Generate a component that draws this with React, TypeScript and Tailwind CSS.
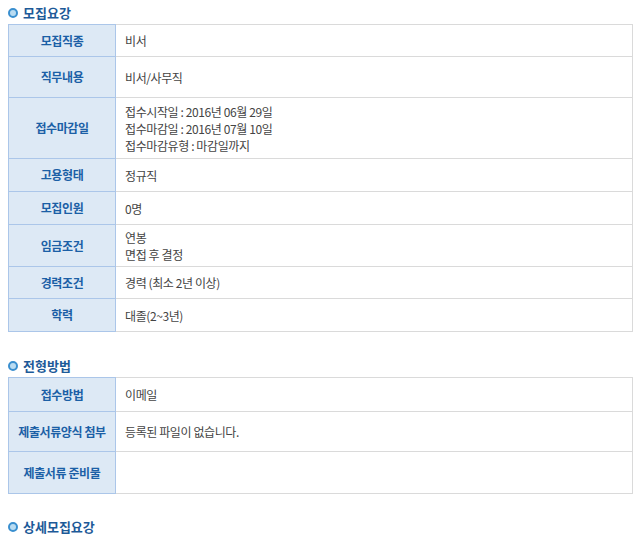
import React from "react";

type Row = { label: string; lines: string[]; h: string };

const recruit: Row[] = [
  { label: "모집직종", lines: ["비서"], h: "h-[32px]" },
  { label: "직무내용", lines: ["비서/사무직"], h: "h-[41px]" },
  {
    label: "접수마감일",
    lines: [
      "접수시작일 : 2016년 06월 29일",
      "접수마감일 : 2016년 07월 10일",
      "접수마감유형 : 마감일까지",
    ],
    h: "h-[61px]",
  },
  { label: "고용형태", lines: ["정규직"], h: "h-[33px]" },
  { label: "모집인원", lines: ["0명"], h: "h-[33px]" },
  { label: "임금조건", lines: ["연봉", "면접 후 결정"], h: "h-[42px]" },
  { label: "경력조건", lines: ["경력 (최소 2년 이상)"], h: "h-[32px]" },
  { label: "학력", lines: ["대졸(2~3년)"], h: "h-[33px]" },
];

const apply: Row[] = [
  { label: "접수방법", lines: ["이메일"], h: "h-[34px]" },
  { label: "제출서류양식 첨부", lines: ["등록된 파일이 없습니다."], h: "h-[40px]" },
  { label: "제출서류 준비물", lines: [], h: "h-[42px]" },
];

function Heading({ title }: { title: string }) {
  return (
    <div className="flex items-center gap-[5px] pl-[8px]">
      <span className="w-[6px] h-[6px] rounded-full bg-[#b9dcf2] border-[2px] border-[#3a8fcf] box-content" />
      <span className="text-[13px] font-bold text-[#1d5a98] leading-none">{title}</span>
    </div>
  );
}

function InfoTable({ rows }: { rows: Row[] }) {
  return (
    <table className="ml-[8px] w-[625px] border-collapse text-[12px] tracking-[-0.4px]">
      <tbody>
        {rows.map((r) => (
          <tr key={r.label} className={r.h}>
            <th className="w-[107px] p-0 bg-[#dde9f5] border border-[#abc6e9] text-[#1b5fa6] font-bold text-center align-middle">
              {r.label}
            </th>
            <td className="pl-[9px] p-0 border border-[#dadada] border-l-[#abc6e9] text-[#444] align-middle leading-[17px]">
              {r.lines.map((l) => (
                <div key={l}>{l}</div>
              ))}
            </td>
          </tr>
        ))}
      </tbody>
    </table>
  );
}

export default function App() {
  return (
    <div
      className="w-[638px] h-[539px] bg-white overflow-hidden"
      style={{ fontFamily: '"Noto Sans CJK KR", "Noto Sans", sans-serif' }}
    >
      <div className="pt-[6px]">
        <Heading title="모집요강" />
      </div>
      <div className="mt-[5px]">
        <InfoTable rows={recruit} />
      </div>
      <div className="mt-[27px]">
        <Heading title="전형방법" />
      </div>
      <div className="mt-[5px]">
        <InfoTable rows={apply} />
      </div>
      <div className="mt-[26px]">
        <Heading title="상세모집요강" />
      </div>
    </div>
  );
}
